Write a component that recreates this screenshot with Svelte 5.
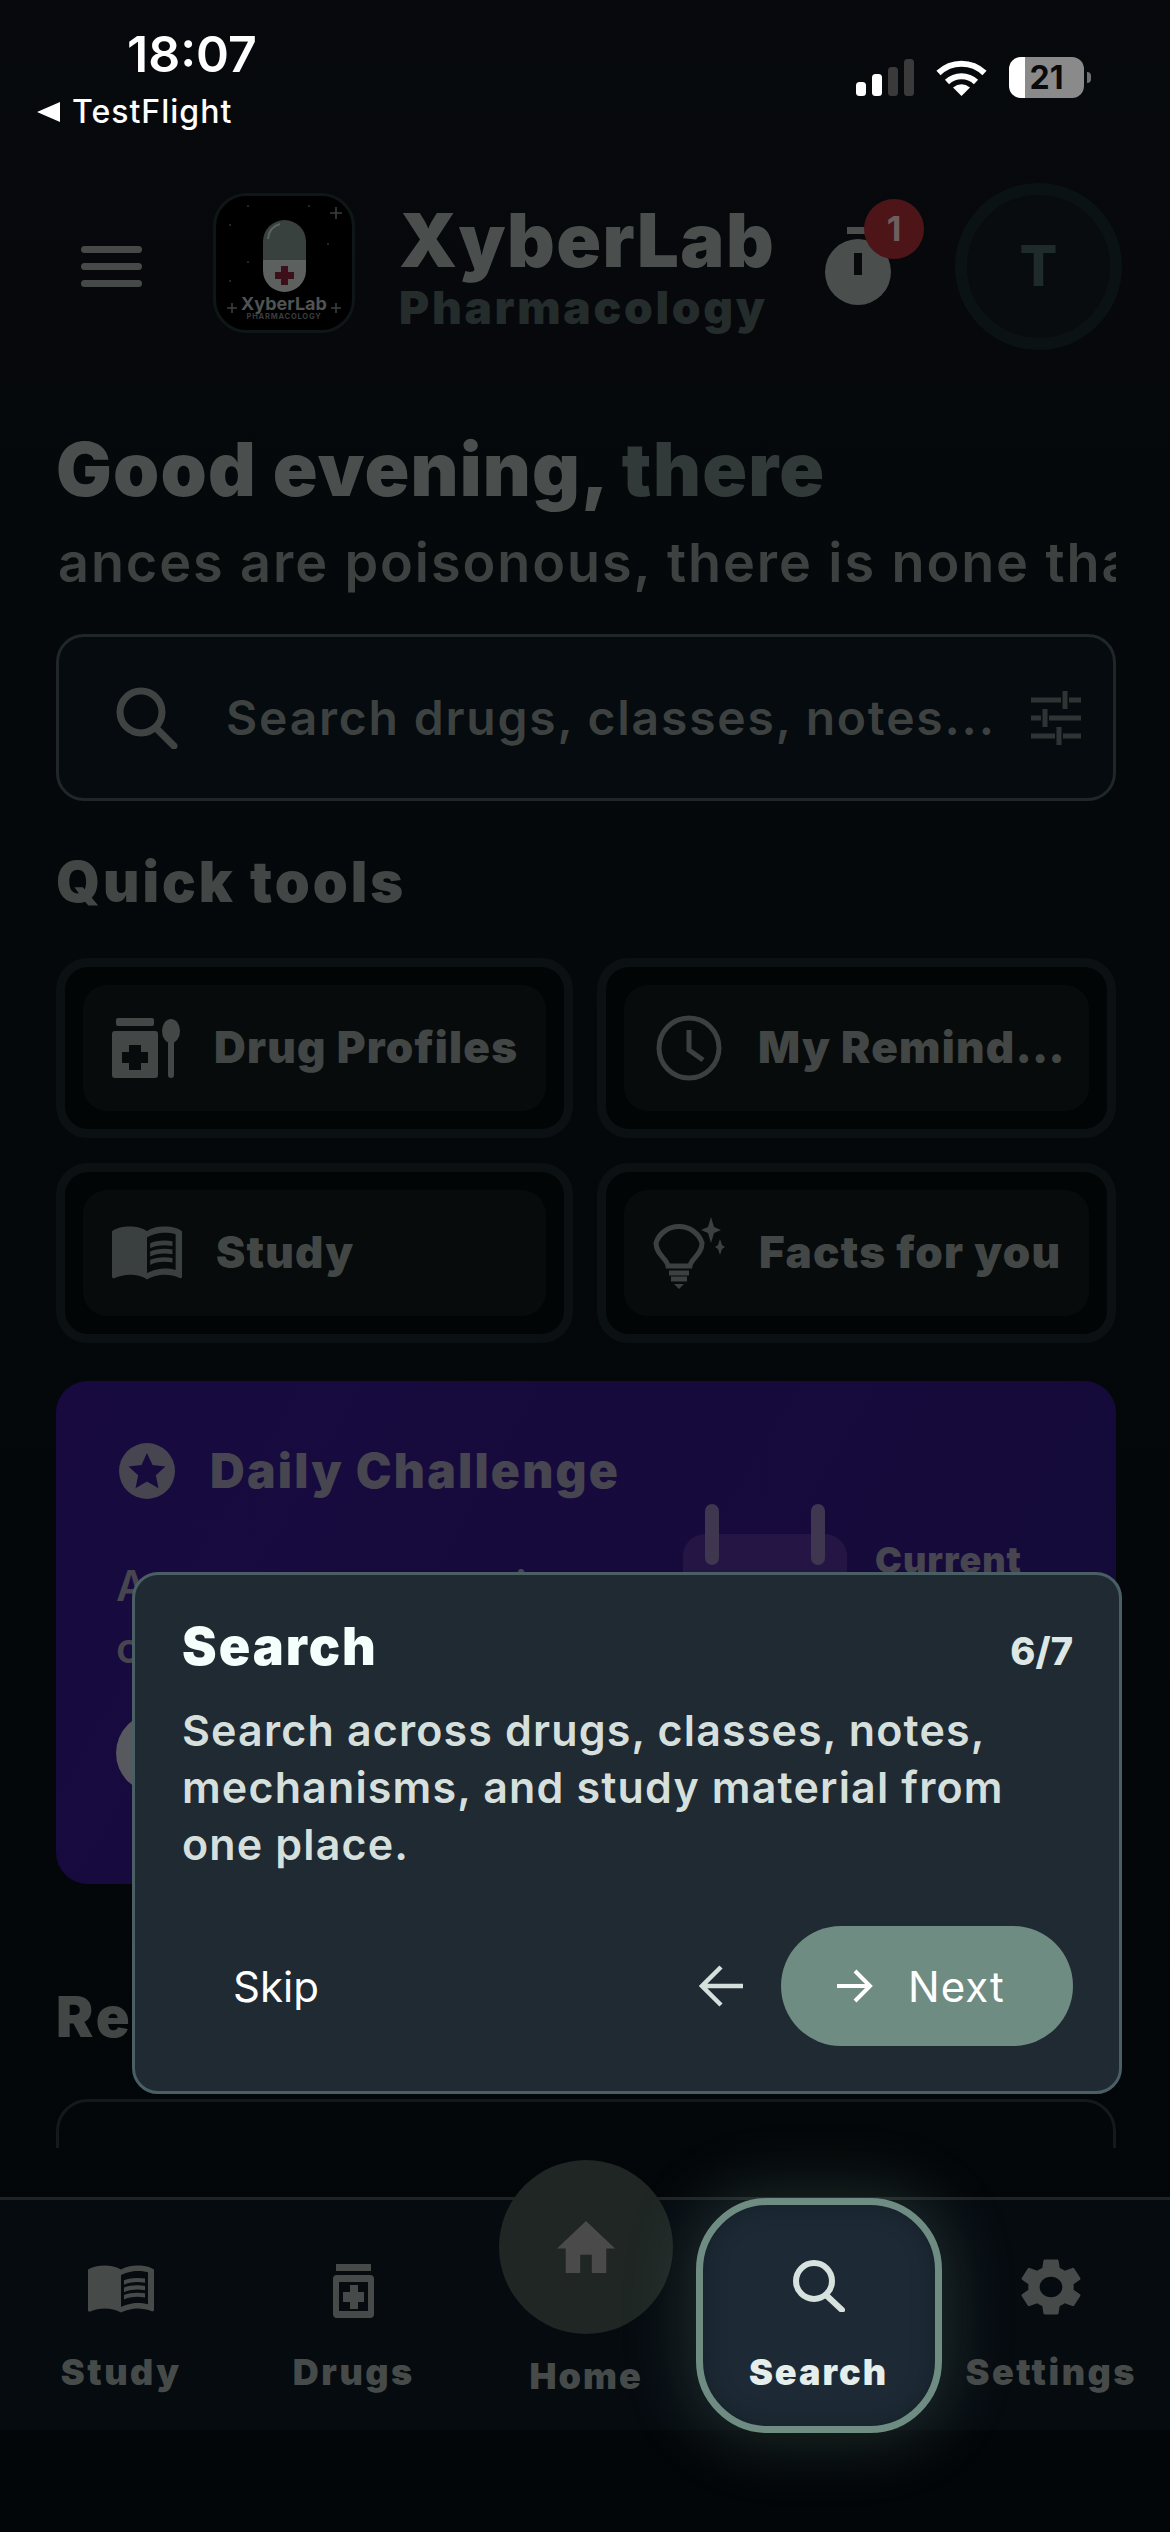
<script>
  const tools = [
    { label: "Drug Profiles", icon: "drug" },
    { label: "My Remind…", icon: "clock" },
    { label: "Study", icon: "book" },
    { label: "Facts for you", icon: "bulb" },
  ];

  const bookOuter =
    "M21 5c-1.11-.35-2.33-.5-3.5-.5-1.95 0-4.05.4-5.5 1.5-1.45-1.1-3.55-1.5-5.5-1.5S2.45 4.9 1 6v14.65c0 .25.25.5.5.5.1 0 .15-.05.25-.05C3.1 20.45 5.05 20 6.5 20c1.95 0 4.05.4 5.5 1.5 1.35-.85 3.8-1.5 5.5-1.5 1.65 0 3.35.3 4.75 1.05.1.05.15.05.25.05.25 0 .5-.25.5-.5V6c-.6-.45-1.25-.75-2-1zm0 13.5c-1.1-.35-2.3-.5-3.5-.5-1.7 0-4.15.65-5.5 1.5V8c1.35-.85 3.8-1.5 5.5-1.5 1.2 0 2.4.15 3.5.5v11.5z";
  const bookLines =
    "M17.5 10.5c.88 0 1.73.09 2.5.26V9.24c-.79-.15-1.64-.24-2.5-.24-1.7 0-3.24.29-4.5.83v1.66c1.13-.64 2.7-.99 4.5-.99zM13 12.49v1.66c1.13-.64 2.7-.99 4.5-.99.88 0 1.73.09 2.5.26V11.9c-.79-.15-1.64-.24-2.5-.24-1.7 0-3.24.3-4.5.83zM17.5 14.33c-1.7 0-3.24.29-4.5.83v1.66c1.13-.64 2.7-.99 4.5-.99.88 0 1.73.09 2.5.26v-1.52c-.79-.16-1.64-.24-2.5-.24z";
  const gear =
    "M19.14 12.94c.04-.3.06-.61.06-.94 0-.32-.02-.64-.07-.94l2.03-1.58c.18-.14.23-.41.12-.61l-1.92-3.32c-.12-.22-.37-.29-.59-.22l-2.39.96c-.5-.38-1.03-.7-1.62-.94l-.36-2.54c-.04-.24-.24-.41-.48-.41h-3.84c-.24 0-.43.17-.47.41l-.36 2.54c-.59.24-1.13.57-1.62.94l-2.39-.96c-.22-.08-.47 0-.59.22L2.74 8.87c-.12.21-.08.47.12.61l2.03 1.58c-.05.3-.09.63-.09.94s.02.64.07.94l-2.03 1.58c-.18.14-.23.41-.12.61l1.92 3.32c.12.22.37.29.59.22l2.39-.96c.5.38 1.03.7 1.62.94l.36 2.54c.05.24.24.41.48.41h3.84c.24 0 .44-.17.47-.41l.36-2.54c.59-.24 1.13-.56 1.62-.94l2.39.96c.22.08.47 0 .59-.22l1.92-3.32c.12-.22.07-.47-.12-.61l-2.01-1.58zM12 15.6c-1.98 0-3.6-1.62-3.6-3.6s1.62-3.6 3.6-3.6 3.6 1.62 3.6 3.6-1.62 3.6-3.6 3.6z";
</script>

<div class="page">
  <div class="status">
    <div class="status-left">
      <span class="time">18:07</span>
      <span class="back"><i class="back-arrow"></i>TestFlight</span>
    </div>
    <div class="status-right">
      <svg class="signal" width="58" height="37" viewBox="0 0 58 37">
        <rect x="0" y="23" width="10" height="14" rx="3.5" fill="#fff" />
        <rect x="16" y="15" width="10" height="22" rx="3.5" fill="#fff" />
        <rect x="32" y="8" width="10" height="29" rx="3.5" fill="#3a3a3a" />
        <rect x="48" y="0" width="10" height="37" rx="3.5" fill="#3a3a3a" />
      </svg>
      <svg class="wifi" width="51" height="37" viewBox="0 0 51 37" fill="none" stroke="#fff" stroke-width="6">
        <path d="M2.5 14 A33 33 0 0 1 48.5 14" />
        <path d="M11 23 A21 21 0 0 1 40 23" />
        <path d="M25.5 37 L17 28.5 Q25.5 22 34 28.5 Z" fill="#fff" stroke="none" />
      </svg>
      <div class="battery">21</div>
      <i class="battery-cap"></i>
    </div>
  </div>

  <header class="header">
    <div class="burger"><i></i><i></i><i></i></div>
    <svg class="logo" width="142" height="140" viewBox="0 0 142 140">
      <rect x="1.5" y="1.5" width="139" height="137" rx="32" fill="#000" stroke="#0f1617" stroke-width="3" />
      <path d="M50 48.5 a21.5 21.5 0 0 1 43 0 v18.5 h-43z" fill="#39413e" />
      <path d="M50 67 h43 v10.5 a21.5 21.5 0 0 1 -43 0z" fill="#5c605f" />
      <path d="M55 46 q1 -12 12 -15" fill="none" stroke="#5c6361" stroke-width="2" />
      <path d="M68 73 h7 v6 h6 v7 h-6 v6 h-7 v-6 h-6 v-7 h6z" fill="#3b101a" />
      <g stroke="#3c3f3f" stroke-width="1.6">
        <path d="M123 14 v12 M117 20 h12" />
        <path d="M19 110 v10 M14 115 h10" />
        <path d="M123 110 v10 M118 115 h10" />
      </g>
      <g fill="#333">
        <circle cx="35" cy="13" r="1" /><circle cx="96" cy="13" r="1" /><circle cx="17" cy="32" r="1" />
        <circle cx="115" cy="51" r="1" /><circle cx="35" cy="69" r="1" /><circle cx="17" cy="88" r="1" />
      </g>
      <text class="logo-name" x="71" y="117" text-anchor="middle">XyberLab</text>
      <text class="logo-sub" x="71" y="126" text-anchor="middle">PHARMACOLOGY</text>
    </svg>
    <div class="brand">
      <span class="brand-name">XyberLab</span>
      <span class="brand-sub">Pharmacology</span>
    </div>
    <div class="timer">
      <svg width="66" height="78" viewBox="0 0 66 78">
        <rect x="22" y="0" width="18" height="7" fill="#4a4f4e" />
        <circle cx="33" cy="45" r="33" fill="#4a4f4e" />
        <rect x="29" y="26" width="8" height="22" fill="#07090b" />
      </svg>
      <span class="timer-badge">1</span>
    </div>
    <div class="avatar">T</div>
  </header>

  <main class="scroll">
    <h1 class="greeting">Good evening, <span>there</span></h1>
    <p class="ticker">ances are poisonous, there is none that is not a poison</p>

    <div class="search">
      <svg width="62" height="62" viewBox="0 0 62 62" fill="none" stroke="#3f4443" stroke-width="7">
        <circle cx="25" cy="25" r="21" />
        <path d="M40 41 L58 59" stroke-linecap="round" />
      </svg>
      <span class="placeholder">Search drugs, classes, notes...</span>
      <svg width="50" height="56" viewBox="0 0 50 56" fill="none" stroke="#2e3433" stroke-width="5">
        <path d="M0 10 H30 M38 10 H50 M34 1 V19" />
        <path d="M0 28 H10 M18 28 H50 M14 19 V37" />
        <path d="M0 46 H24 M32 46 H50 M28 37 V55" />
      </svg>
    </div>

    <h2 class="section">Quick tools</h2>

    <div class="tools">
      {#each tools as tool}
        <div class="tool">
          <div class="tool-inner">
            {#if tool.icon === "drug"}
              <svg class="tool-icon" width="68" height="60" viewBox="0 0 68 60" fill="#434847">
                <rect x="4" y="0" width="38" height="8" rx="2" />
                <path d="M3 13 h40 a3 3 0 0 1 3 3 v41 a3 3 0 0 1 -3 3 h-40 a3 3 0 0 1 -3 -3 v-41 a3 3 0 0 1 3 -3z M17 27 v7 h-7 v11 h7 v7 h12 v-7 h7 v-11 h-7 v-7z" fill-rule="evenodd" />
                <ellipse cx="59" cy="13" rx="9" ry="12" />
                <rect x="56" y="22" width="6" height="38" rx="3" />
              </svg>
            {:else if tool.icon === "clock"}
              <svg class="tool-icon" width="68" height="66" viewBox="0 0 68 66" fill="none" stroke="#3c4140" stroke-width="5">
                <circle cx="33" cy="33" r="30" />
                <path d="M33 15 V35 L47 45" />
              </svg>
            {:else if tool.icon === "book"}
              <svg class="tool-icon" width="70" height="56" viewBox="1 4 22 18" fill="#3a403f" preserveAspectRatio="none">
                <path d={bookOuter} /><path d={bookLines} />
              </svg>
            {:else}
              <svg class="tool-icon bulb" width="72" height="72" viewBox="0 0 72 72" fill="none" stroke="#3c4140" stroke-width="5">
                <path d="M15 49 C14 41 3 38 3 26 A24 23 0 0 1 49 26 C49 38 38 41 37 49 Z" />
                <path d="M16 56 H36 M18 62 H34" />
                <path d="M21 67 H31 L26 72Z" fill="#3c4140" stroke="none" />
                <path d="M58 0 l3 10 l7 3 l-7 3 l-3 10 l-3 -10 l-7 -3 l7 -3z" fill="#3c4140" stroke="none" />
                <path d="M67 22 l2 6 l3 2 l-3 2 l-2 6 l-2 -6 l-3 -2 l3 -2z" fill="#3c4140" stroke="none" />
              </svg>
            {/if}
            <span class="tool-label">{tool.label}</span>
          </div>
        </div>
      {/each}
    </div>

    <section class="challenge">
      <div class="challenge-head">
        <svg width="56" height="56" viewBox="0 0 56 56">
          <circle cx="28" cy="28" r="28" fill="#47454f" />
          <path d="M28 10 l5.5 12 l13 1.5 l-9.7 8.8 l2.7 12.9 l-11.5 -6.6 l-11.5 6.6 l2.7 -12.9 l-9.7 -8.8 l13 -1.5z" fill="#170a3c" />
        </svg>
        <span>Daily Challenge</span>
      </div>
      <div class="challenge-body">
        <div class="challenge-copy">
          <p>Answer one question<br />challenge</p>
          <span class="challenge-btn">Start</span>
        </div>
        <div class="calendar"><i></i><i></i></div>
        <span class="streak">Current</span>
      </div>
    </section>

    <h2 class="section recent">Recent</h2>
    <div class="recent-card"></div>
  </main>

  <nav class="nav">
    <div class="tab">
      <svg width="66" height="50" viewBox="1 4 22 18" fill="#464b4a" preserveAspectRatio="none">
        <path d={bookOuter} /><path d={bookLines} />
      </svg>
      <span>Study</span>
    </div>
    <div class="tab">
      <svg width="41" height="54" viewBox="0 0 41 54" fill="#464b4a">
        <rect x="3" y="0" width="35" height="7" />
        <path d="M4 11 h33 a4 4 0 0 1 4 4 v35 a4 4 0 0 1 -4 4 h-33 a4 4 0 0 1 -4 -4 v-35 a4 4 0 0 1 4 -4z M6 18 v29 h29 v-29z M17 21 v7 h-7 v10 h7 v7 h8 v-7 h6 v-10 h-6 v-7z" fill-rule="evenodd" />
      </svg>
      <span>Drugs</span>
    </div>
    <div class="tab home">
      <div class="home-circle">
        <svg width="58" height="52" viewBox="2 3 20 17" fill="#4a4a4a" preserveAspectRatio="none">
          <path d="M10 20v-6h4v6h5v-8h3L12 3 2 12h3v8z" />
        </svg>
      </div>
      <span>Home</span>
    </div>
    <div class="tab active">
      <svg width="52" height="52" viewBox="0 0 52 52" fill="none" stroke="#d7e2df" stroke-width="6">
        <circle cx="21" cy="21" r="18" />
        <path d="M33 35 L49 50" stroke-linecap="round" />
      </svg>
      <span>Search</span>
    </div>
    <div class="tab settings">
      <svg width="60" height="60" viewBox="2.5 1.5 19 21" fill="#464b4a" preserveAspectRatio="none">
        <path d={gear} />
      </svg>
      <span>Settings</span>
    </div>
  </nav>

  <div class="coach">
    <div class="coach-head">
      <h3>Search</h3>
      <span>6/7</span>
    </div>
    <p>Search across drugs, classes, notes, mechanisms, and study material from one place.</p>
    <div class="coach-foot">
      <span class="skip">Skip</span>
      <svg class="prev" width="44" height="42" viewBox="0 0 44 42" fill="none" stroke="#d5dfdc" stroke-width="4.5">
        <path d="M44 21 H3 M22 2 L3 21 L22 40" />
      </svg>
      <div class="next">
        <svg width="36" height="34" viewBox="0 0 36 34" fill="none" stroke="#fff" stroke-width="4">
          <path d="M0 17 H33 M18 2 L33 17 L18 32" />
        </svg>
        <span>Next</span>
      </div>
    </div>
  </div>
</div>

<style>
  :global(body) {
    margin: 0;
    background: #04070a;
  }

  .page {
    position: relative;
    width: 1170px;
    height: 2532px;
    overflow: hidden;
    background: linear-gradient(#07090c, #04080b 40%, #030608);
    font-family: Inter, "Noto Sans", sans-serif;
  }

  /* status bar */
  .status {
    height: 183px;
    box-sizing: border-box;
    display: flex;
    justify-content: space-between;
    padding: 0 79px 0 37px;
  }

  .status-left {
    display: flex;
    flex-direction: column;
  }

  .time {
    margin: 24px 0 0 90px;
    font-size: 50px;
    line-height: 60px;
    font-weight: 600;
    color: #fff;
  }

  .back {
    display: flex;
    align-items: center;
    gap: 12px;
    margin-top: 8px;
    font-size: 32px;
    line-height: 40px;
    font-weight: 500;
    letter-spacing: 1px;
    color: #fff;
  }

  .back-arrow {
    width: 0;
    height: 0;
    border-style: solid;
    border-width: 10px 23px 10px 0;
    border-color: transparent #fff transparent transparent;
  }

  .status-right {
    display: flex;
    align-items: flex-start;
    padding-top: 57px;
  }

  .signal {
    margin-top: 2px;
  }

  .wifi {
    margin: 2px 0 0 22px;
  }

  .battery {
    width: 75px;
    height: 41px;
    margin-left: 22px;
    border-radius: 12px;
    background: linear-gradient(90deg, #fff 16px, #8a8a8a 16px);
    color: #0a0a0a;
    font-size: 32px;
    line-height: 41px;
    font-weight: 700;
    text-align: center;
  }

  .battery-cap {
    width: 4px;
    height: 11px;
    margin: 15px 0 0 3px;
    border-radius: 0 4px 4px 0;
    background: #6f6f6f;
  }

  /* header */
  .header {
    height: 167px;
    display: flex;
    align-items: center;
    padding-left: 81px;
  }

  .burger {
    width: 61px;
    display: flex;
    flex-direction: column;
    gap: 10px;
  }

  .burger i {
    height: 7px;
    border-radius: 4px;
    background: #454a49;
  }

  .logo {
    margin-left: 71px;
    margin-top: -8px;
  }

  .logo-name {
    font-size: 18px;
    font-weight: 700;
    fill: #4f5352;
  }

  .logo-sub {
    font-size: 7.5px;
    font-weight: 700;
    letter-spacing: 0.8px;
    fill: #3a3d3c;
  }

  .brand {
    width: 426px;
    margin-left: 44px;
    display: flex;
    flex-direction: column;
  }

  .brand-name {
    margin-top: 2px;
    font-size: 74px;
    line-height: 78px;
    font-weight: 900;
    letter-spacing: 1.4px;
    color: #4a4f4e;
  }

  .brand-sub {
    margin-top: 1px;
    font-size: 46px;
    line-height: 54px;
    font-weight: 900;
    letter-spacing: 2.7px;
    color: #252d2c;
  }

  .timer {
    position: relative;
    width: 66px;
    height: 78px;
    margin-top: -2px;
  }

  .timer svg {
    display: block;
  }

  .timer-badge {
    position: absolute;
    left: 39px;
    top: -28px;
    width: 60px;
    height: 60px;
    border-radius: 50%;
    background: #4e1519;
    color: #6d5f5f;
    font-size: 34px;
    line-height: 60px;
    font-weight: 700;
    text-align: center;
  }

  .avatar {
    width: 167px;
    height: 167px;
    box-sizing: border-box;
    margin-left: 64px;
    border: 12px solid #0b1213;
    border-radius: 50%;
    background: #090c0e;
    color: #1f2a2a;
    font-size: 56px;
    line-height: 143px;
    font-weight: 800;
    text-align: center;
  }

  /* scrolling content */
  .scroll {
    height: 1798px;
    box-sizing: border-box;
    overflow: hidden;
    padding: 0 54px 0 56px;
  }

  .greeting {
    margin: 75px 0 0 0;
    font-size: 74px;
    line-height: 88px;
    font-weight: 900;
    letter-spacing: 1.2px;
    color: #4a4f4e;
  }

  .greeting span {
    color: #323a39;
  }

  .ticker {
    margin: 18px 0 0 2px;
    overflow: hidden;
    white-space: nowrap;
    font-size: 54px;
    line-height: 64px;
    font-weight: 600;
    letter-spacing: 1.9px;
    color: #3d4241;
  }

  .search {
    height: 167px;
    box-sizing: border-box;
    margin-top: 39px;
    display: flex;
    align-items: center;
    padding: 0 32px 0 57px;
    border: 3px solid #1f2728;
    border-radius: 28px;
    background: #060b0f;
  }

  .placeholder {
    flex: 1;
    margin-left: 48px;
    font-size: 48px;
    font-weight: 600;
    letter-spacing: 1.8px;
    color: #3d4241;
    white-space: nowrap;
  }

  .section {
    margin: 47px 0 0 0;
    font-size: 56px;
    line-height: 68px;
    font-weight: 900;
    letter-spacing: 3px;
    color: #424746;
  }

  .tools {
    display: grid;
    grid-template-columns: 517px 519px;
    gap: 25px 24px;
    margin-top: 42px;
  }

  .tool {
    height: 180px;
    box-sizing: border-box;
    padding: 18px;
    border: 9px solid #0b1112;
    border-radius: 32px;
    background: #020506;
  }

  .tool-inner {
    height: 126px;
    display: flex;
    align-items: center;
    gap: 34px;
    padding: 0 28px 0 29px;
    border-radius: 24px;
    background: #080b0c;
  }

  .tool:nth-child(even) .tool-inner {
    padding-left: 29px;
  }

  .tool:nth-child(2) .tool-inner {
    padding-left: 32px;
  }

  .tool-icon {
    flex: none;
  }

  .tool-label {
    margin-top: -3px;
    font-size: 44px;
    font-weight: 900;
    letter-spacing: 1.2px;
    color: #424746;
    white-space: nowrap;
  }

  .challenge {
    height: 503px;
    box-sizing: border-box;
    margin-top: 38px;
    padding: 60px 60px 0 63px;
    border-radius: 32px;
    background: linear-gradient(120deg, #180a40, #140b38);
  }

  .challenge-head {
    display: flex;
    align-items: center;
    gap: 35px;
    font-size: 48px;
    font-weight: 900;
    letter-spacing: 2.2px;
    color: #47454f;
  }

  .challenge-body {
    position: relative;
    display: flex;
    margin-top: 5px;
  }

  .challenge-copy {
    width: 567px;
    margin-left: -3px;
    padding-top: 50px;
  }

  .challenge-copy p {
    margin: 0;
    font-size: 42px;
    line-height: 62px;
    font-weight: 600;
    letter-spacing: 2px;
    color: #47454f;
    white-space: nowrap;
  }

  .challenge-btn {
    display: block;
    width: 200px;
    height: 80px;
    margin-top: 34px;
    border-radius: 40px;
    background: #58585f;
    color: transparent;
  }

  .calendar {
    position: relative;
    width: 164px;
    height: 150px;
    margin-top: 29px;
    border-radius: 22px;
    background: #241545;
  }

  .calendar i {
    position: absolute;
    top: -30px;
    left: 22px;
    width: 14px;
    height: 61px;
    border-radius: 7px;
    background: #3f3650;
  }

  .calendar i + i {
    left: 128px;
  }

  .streak {
    margin: 33px 0 0 28px;
    font-size: 36px;
    font-weight: 900;
    letter-spacing: 1px;
    color: #47454f;
  }

  .recent {
    margin-top: 99px;
  }

  .recent-card {
    height: 300px;
    margin-top: 48px;
    border: 3px solid #14191b;
    border-radius: 32px;
    background: #040709;
  }

  /* bottom nav */
  .nav {
    height: 233px;
    box-sizing: border-box;
    margin-top: 49px;
    display: grid;
    grid-template-columns: repeat(5, 232.5px);
    padding-left: 5px;
    border-top: 3px solid #1e2424;
    background: #060b10;
  }

  .tab {
    position: relative;
    display: flex;
    flex-direction: column;
    align-items: center;
    height: 230px;
    color: #464b4a;
    font-size: 36px;
    font-weight: 900;
    letter-spacing: 2.5px;
  }

  .tab svg {
    flex: none;
    margin-top: 64px;
  }

  .tab.settings svg {
    margin-top: 57px;
  }

  .tab span {
    position: absolute;
    top: 150px;
    line-height: 44px;
    white-space: nowrap;
  }

  .tab.home span {
    top: 154px;
    letter-spacing: 2px;
  }

  .home-circle {
    position: absolute;
    top: -40px;
    width: 174px;
    height: 174px;
    display: flex;
    justify-content: center;
    border-radius: 50%;
    background: #1f2624;
  }

  .home-circle svg {
    margin-top: 61px;
  }

  .tab.active {
    box-sizing: border-box;
    width: 246px;
    height: 235px;
    margin: -2px 0 0 -7px;
    border: 7px solid #6f8c82;
    border-radius: 72px;
    background: #1d2a35;
    box-shadow: 0 0 60px 14px rgba(95, 135, 125, 0.24), inset 0 0 22px rgba(12, 18, 22, 0.45);
    color: #e5eeeb;
    letter-spacing: 2px;
  }

  .tab.active svg {
    margin-top: 55px;
  }

  .tab.active span {
    top: 145px;
  }

  /* coach mark */
  .coach {
    position: absolute;
    left: 132px;
    top: 1572px;
    width: 990px;
    height: 522px;
    box-sizing: border-box;
    padding: 40px 46px 0 47px;
    border: 3px solid #4a5f63;
    border-radius: 26px;
    background: #1f2a33;
  }

  .coach-head {
    display: flex;
    justify-content: space-between;
    align-items: baseline;
  }

  .coach-head h3 {
    margin: 0;
    font-size: 52px;
    line-height: 64px;
    font-weight: 900;
    letter-spacing: 2px;
    color: #f5fffb;
  }

  .coach-head span {
    font-size: 38px;
    font-weight: 800;
    color: #dde8e6;
  }

  .coach p {
    width: 860px;
    margin: 23px 0 0;
    font-size: 43px;
    line-height: 57px;
    font-weight: 600;
    letter-spacing: 1.15px;
    color: #d5dfdc;
  }

  .coach-foot {
    display: flex;
    align-items: center;
    margin-top: 53px;
  }

  .skip {
    flex: 1;
    margin-left: 51px;
    font-size: 42px;
    color: #fff;
  }

  .prev {
    margin-right: 38px;
  }

  .next {
    width: 292px;
    height: 120px;
    box-sizing: border-box;
    display: flex;
    align-items: center;
    gap: 35px;
    padding-left: 56px;
    border-radius: 60px;
    background: #6f8c82;
    color: #fff;
    font-size: 42px;
    letter-spacing: 1px;
  }
</style>
